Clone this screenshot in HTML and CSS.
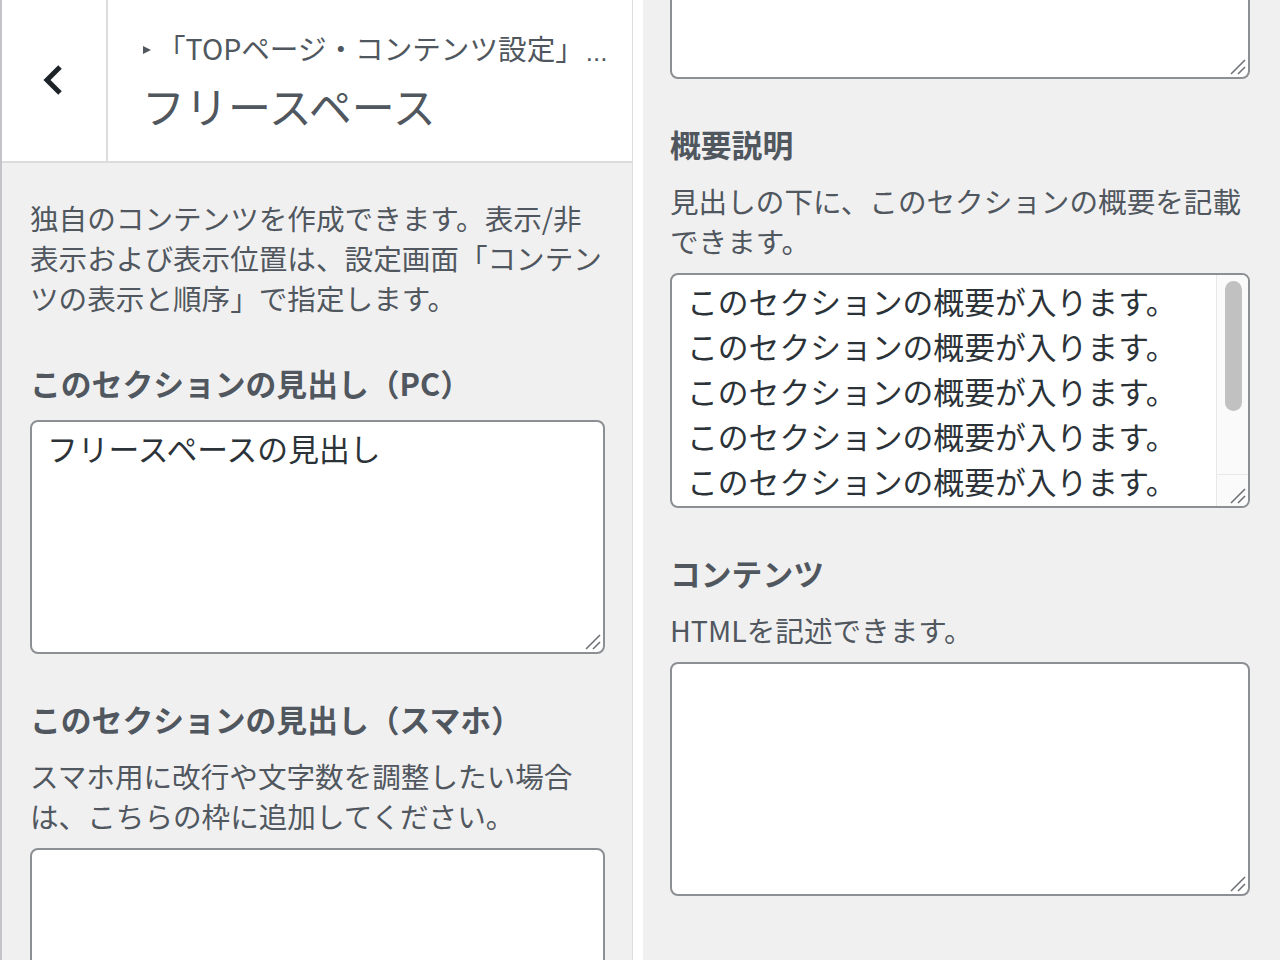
FILE: index.html
```html
<!DOCTYPE html>
<html lang="ja">

<head>
    <meta charset="UTF-8">
    <meta name="viewport" content="width=device-width, initial-scale=1.0">
    <title>フリースペース</title>
    <link rel="stylesheet" href="styles.css">
</head>

<body>
    <div class="layout">
        <aside class="sidebar">
            <header class="section-head">
                <button class="back" aria-label="戻る">
                    <svg width="26" height="34" viewBox="0 0 26 34">
                        <polyline points="20,4 7,17 20,30" fill="none" stroke="#1d2327" stroke-width="5" />
                    </svg>
                </button>
                <div class="head-title">
                    <div class="crumb"><span class="crumb-arrow"></span>「TOPページ・コンテンツ設定」<span class="dots">...</span></div>
                    <h2 class="title">フリースペース</h2>
                </div>
            </header>

            <div class="section-body">
                <p class="section-desc">独自のコンテンツを作成できます。表示/非表示および表示位置は、設定画面「コンテンツの表示と順序」で指定します。</p>

                <div class="control">
                    <label class="control-title">このセクションの見出し（PC）</label>
                    <div class="field-wrap">
                        <textarea class="field">フリースペースの見出し</textarea>
                        <svg class="grip" width="16" height="16" viewBox="0 0 16 16"><line x1="1" y1="15" x2="15" y2="1" /><line x1="8" y1="15" x2="15" y2="8" /></svg>
                    </div>
                </div>

                <div class="control">
                    <label class="control-title">このセクションの見出し（スマホ）</label>
                    <p class="control-desc">スマホ用に改行や文字数を調整したい場合は、こちらの枠に追加してください。</p>
                    <div class="field-wrap">
                        <textarea class="field"></textarea>
                        <svg class="grip" width="16" height="16" viewBox="0 0 16 16"><line x1="1" y1="15" x2="15" y2="1" /><line x1="8" y1="15" x2="15" y2="8" /></svg>
                    </div>
                </div>
            </div>
        </aside>

        <main class="pane">
            <!-- same panel, scrolled further down -->
            <div class="pane-scroll">
                <div class="control">
                    <div class="field-wrap">
                        <textarea class="field"></textarea>
                        <svg class="grip" width="16" height="16" viewBox="0 0 16 16"><line x1="1" y1="15" x2="15" y2="1" /><line x1="8" y1="15" x2="15" y2="8" /></svg>
                    </div>
                </div>

                <div class="control">
                    <label class="control-title">概要説明</label>
                    <p class="control-desc">見出しの下に、このセクションの概要を記載できます。</p>
                    <div class="field-wrap">
                        <textarea class="field field-scroll">このセクションの概要が入ります。
このセクションの概要が入ります。
このセクションの概要が入ります。
このセクションの概要が入ります。
このセクションの概要が入ります。
このセクションの概要が入ります。
このセクションの概要が入ります。</textarea>
                        <div class="scrollbar"><div class="scroll-thumb"></div></div>
                        <div class="scroll-corner"></div>
                        <svg class="grip" width="16" height="16" viewBox="0 0 16 16"><line x1="1" y1="15" x2="15" y2="1" /><line x1="8" y1="15" x2="15" y2="8" /></svg>
                    </div>
                </div>

                <div class="control">
                    <label class="control-title">コンテンツ</label>
                    <p class="control-desc">HTMLを記述できます。</p>
                    <div class="field-wrap">
                        <textarea class="field"></textarea>
                        <svg class="grip" width="16" height="16" viewBox="0 0 16 16"><line x1="1" y1="15" x2="15" y2="1" /><line x1="8" y1="15" x2="15" y2="8" /></svg>
                    </div>
                </div>
            </div>
        </main>
    </div>
</body>

</html>
```

FILE: styles.css
```css
body {
    margin: 0;
    background-color: #fff;
    font-family: "Noto Sans CJK JP", "Noto Sans", sans-serif;
    color: #50575e;
}

.layout {
    display: flex;
    height: 960px;
    overflow: hidden;
}

.sidebar {
    width: 630px;
    flex-shrink: 0;
    border-left: 2px solid #c3c4c7;
    border-right: 1px solid #dcdcde;
    background-color: #f0f0f1;
}

.section-head {
    display: flex;
    height: 161px;
    background-color: #fff;
    border-bottom: 2px solid #dcdcde;
}

.back {
    width: 106px;
    padding: 0;
    border: none;
    border-right: 2px solid #dcdcde;
    background: #fff;
    display: flex;
    align-items: center;
    justify-content: center;
    cursor: pointer;
}

.back svg {
    margin-left: -2px;
    margin-top: -2px;
}

.head-title {
    padding: 28px 0 0 34px;
    min-width: 0;
}

.crumb {
    display: flex;
    align-items: center;
    height: 40px;
    font-size: 28.6px;
    line-height: 40px;
    white-space: nowrap;
}

.crumb-arrow {
    width: 0;
    height: 0;
    border-left: 8px solid #50575e;
    border-top: 4.5px solid transparent;
    border-bottom: 4.5px solid transparent;
    margin: 4px 6px 0 1px;
}

.dots {
    font-family: "Liberation Sans", sans-serif;
    font-size: 26px;
    line-height: 32px;
    margin: 8px 0 0 2px;
}

.title {
    margin: 9px 0 0;
    font-size: 43px;
    line-height: 56px;
    font-weight: normal;
}

.section-body {
    padding: 35px 27px 0 28px;
}

.section-desc {
    margin: 0 0 45px;
    font-size: 28.6px;
    line-height: 40px;
}

.control {
    margin-bottom: 45px;
}

.control-title {
    display: block;
    margin-bottom: 17px;
    font-size: 30.8px;
    line-height: 40px;
    font-weight: bold;
}

.control-desc {
    margin: 0 0 12px;
    font-size: 28.6px;
    line-height: 40px;
}

.field-wrap {
    position: relative;
}

.field {
    display: block;
    box-sizing: border-box;
    width: 100%;
    height: 234px;
    margin: 0;
    padding: 3px 15px;
    border: 2px solid #8c8f94;
    border-radius: 8px;
    background-color: #fff;
    color: #2c3338;
    font-family: "Noto Sans CJK JP", "Noto Sans", sans-serif;
    font-size: 30.8px;
    line-height: 45px;
    resize: none;
    outline: none;
}

.grip {
    position: absolute;
    right: 4px;
    bottom: 4px;
    stroke: #6e7176;
    stroke-width: 1.6;
}

.pane {
    flex: 1;
    margin-left: 10px;
    background-color: #f0f0f1;
    overflow: hidden;
}

.pane-scroll {
    margin-top: -155px;
    padding: 0 30px 0 27px;
}

.field-scroll {
    height: 235px;
    padding-right: 48px;
    overflow: hidden;
}

.scrollbar {
    position: absolute;
    top: 2px;
    right: 2px;
    bottom: 34px;
    width: 31px;
    background-color: #fafafa;
    border-left: 1px solid #e8e8e8;
    border-top-right-radius: 6px;
}

.scroll-thumb {
    width: 17px;
    height: 130px;
    margin: 6px 0 0 8px;
    border-radius: 9px;
    background-color: #c1c1c1;
}

.scroll-corner {
    position: absolute;
    right: 2px;
    bottom: 2px;
    width: 31px;
    height: 31px;
    background-color: #fafafa;
    border-top: 1px solid #e8e8e8;
    border-left: 1px solid #e8e8e8;
    border-bottom-right-radius: 6px;
}
```
